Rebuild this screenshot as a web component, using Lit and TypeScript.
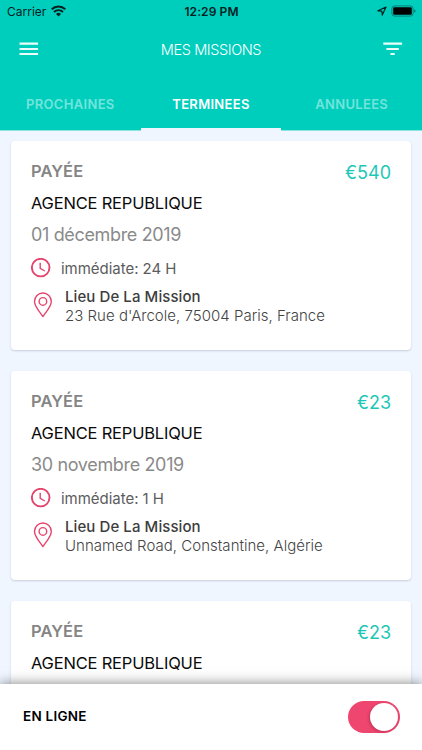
import { LitElement, html, css, nothing } from "lit";
import { customElement, property, state } from "lit/decorators.js";
import { classMap } from "lit/directives/class-map.js";

interface Mission {
  status: string;
  price: string;
  agency: string;
  date?: string;
  duration?: string;
  address?: string;
}

@customElement("status-bar")
class StatusBar extends LitElement {
  static styles = css`
    :host {
      display: grid;
      grid-template-columns: 1fr auto 1fr;
      align-items: center;
      height: 22px;
      padding: 0 6px 0 7px;
      color: #04211e;
    }
    .left { display: flex; align-items: center; gap: 5px; }
    .carrier { font-size: 12px; letter-spacing: 0; }
    .time { font-size: 12px; font-weight: 600; letter-spacing: 0.1px; }
    .right { display: flex; align-items: center; justify-content: flex-end; gap: 4px; }
    svg { display: block; }
  `;
  render() {
    return html`
      <div class="left">
        <span class="carrier">Carrier</span>
        <svg width="15" height="12" viewBox="0 0 15 12" fill="none" stroke="#04211e">
          <path d="M0.7 4.3A9.6 9.6 0 0 1 14.3 4.3" stroke-width="2.1" />
          <path d="M3 7A6.3 6.3 0 0 1 12 7" stroke-width="1.9" />
          <path d="M7.5 11.6L5 9A3.5 3.5 0 0 1 10 9Z" fill="#04211e" stroke="none" />
        </svg>
      </div>
      <span class="time">12:29 PM</span>
      <div class="right">
        <svg width="10" height="10" viewBox="0 0 10 10" fill="none" stroke="#04211e" stroke-width="1.2" stroke-linejoin="round">
          <path d="M9 1L0.9 4.8L4.8 5.2L5.3 9.1Z" />
        </svg>
        <svg width="25" height="12" viewBox="0 0 25 12">
          <rect x="0.9" y="0.9" width="21.2" height="10.2" rx="2.8" fill="none" stroke="#04211e" stroke-opacity="0.45" />
          <rect x="2.2" y="2.2" width="18.6" height="7.6" rx="1.4" fill="#000" />
          <path d="M23.2 4.2Q24.6 4.8 24.6 6T23.2 7.8Z" fill="#04211e" fill-opacity="0.5" />
        </svg>
      </div>
    `;
  }
}

@customElement("mission-card")
class MissionCard extends LitElement {
  @property({ attribute: false }) mission!: Mission;
  static styles = css`
    :host {
      display: block;
      box-sizing: border-box;
      height: 209px;
      flex: none;
      padding: 20px 20px 0;
      background: #fff;
      border-radius: 4px;
      box-shadow: 0 1px 2px rgba(60, 70, 90, 0.22);
      white-space: nowrap;
    }
    .head { display: flex; justify-content: space-between; height: 22px; }
    .status { font-size: 16.5px; line-height: 20px; font-weight: 600; letter-spacing: 0.1px; color: #858585; }
    .price { font-size: 18px; line-height: 23px; color: #1dc7b7; }
    .agency { height: 20px; margin-top: 10px; font-size: 16.5px; line-height: 20px; letter-spacing: -0.2px; color: #0a0a0a; }
    .date { height: 22px; margin-top: 11px; font-size: 18px; line-height: 22px; letter-spacing: -0.35px; color: #8a8a8a; }
    .row { display: flex; align-items: center; }
    .when { height: 20px; margin-top: 12px; }
    .where { height: 38px; margin-top: 9px; }
    .clock { width: 20px; margin-right: 10px; }
    .pin { width: 20px; margin: 0 12px 0 2px; position: relative; top: -1px; }
    .duration { font-size: 15px; letter-spacing: -0.03px; color: #5c5c5c; }
    .title { font-size: 15px; font-weight: 500; line-height: 19px; letter-spacing: 0.08px; color: #3d3d3d; }
    .address { font-size: 15px; font-weight: 300; line-height: 19px; letter-spacing: 0.02px; color: #444; }
    svg { display: block; }
  `;
  private details(m: Mission) {
    return html`
      <div class="date"><span>${m.date}</span></div>
      <div class="row when">
        <svg class="clock" width="20" height="20" viewBox="0 0 20 20" fill="none" stroke="#e5446d">
          <circle cx="9.7" cy="9.6" r="8.8" stroke-width="1.9" />
          <path d="M9.2 4.8V10.3L13.8 13" stroke-width="1.4" />
        </svg>
        <span class="duration">${m.duration}</span>
      </div>
      <div class="row where">
        <svg class="pin" width="20" height="26" viewBox="0 0 20 26" fill="none" stroke="#e5446d" stroke-width="1.4" stroke-linejoin="round">
          <path d="M9.9 24.5C7 20.3 1.5 14.3 1.5 9.4A8.4 8.4 0 0 1 18.3 9.4C18.3 14.3 12.8 20.3 9.9 24.5Z" />
          <circle cx="9.9" cy="9.4" r="3.8" />
        </svg>
        <div>
          <div class="title"><span>Lieu De La Mission</span></div>
          <div class="address"><span>${m.address}</span></div>
        </div>
      </div>
    `;
  }
  render() {
    const m = this.mission;
    return html`
      <div class="head"><span class="status">${m.status}</span><span class="price">${m.price}</span></div>
      <div class="agency"><span>${m.agency}</span></div>
      ${m.date ? this.details(m) : nothing}
    `;
  }
}

@customElement("app-root")
class AppRoot extends LitElement {
  @state() private tab = 1;
  @state() private online = true;
  private tabs = ["PROCHAINES", "TERMINEES", "ANNULEES"];
  private missions: Mission[] = [
    { status: "PAYÉE", price: "€540", agency: "AGENCE REPUBLIQUE", date: "01 décembre 2019", duration: "immédiate: 24 H", address: "23 Rue d'Arcole, 75004 Paris, France" },
    { status: "PAYÉE", price: "€23", agency: "AGENCE REPUBLIQUE", date: "30 novembre 2019", duration: "immédiate: 1 H", address: "Unnamed Road, Constantine, Algérie" },
    { status: "PAYÉE", price: "€23", agency: "AGENCE REPUBLIQUE" },
  ];
  static styles = css`
    :host {
      display: flex;
      flex-direction: column;
      height: 750px;
      overflow: hidden;
      background: #eff6ff;
      font-family: Inter, "Liberation Sans", sans-serif;
    }
    .header { flex: none; height: 130px; background: #00cebd; box-shadow: 0 1px 0 #8ee5e0; z-index: 1; }
    .bar { display: grid; grid-template-columns: 1fr auto 1fr; align-items: center; height: 54px; padding: 0 19px; }
    .heading { font-size: 14.5px; font-weight: 300; letter-spacing: -0.4px; color: #fff; }
    .filter { justify-self: end; }
    svg { display: block; }
    .tabs { display: grid; grid-template-columns: repeat(3, 1fr); height: 55px; }
    .tab {
      box-sizing: border-box;
      display: flex;
      align-items: center;
      justify-content: center;
      padding-top: 3px;
      border-bottom: 3px solid transparent;
      font-size: 13px;
      font-weight: 600;
      letter-spacing: 0.32px;
      color: #73e4db;
      cursor: pointer;
    }
    .tab.active { color: #fff; border-color: #eff6ff; box-shadow: 0 1px 0 #eff6ff; }
    .list { flex: 1; min-height: 0; overflow: hidden; display: flex; flex-direction: column; gap: 21px; padding: 11px 11px 0; }
    .footer {
      position: relative;
      flex: none;
      display: flex;
      align-items: center;
      justify-content: space-between;
      box-sizing: border-box;
      height: 66px;
      padding: 0 22px 1px 23px;
      background: #fff;
      box-shadow: 0 0 12px rgba(0, 0, 0, 0.5);
    }
    .online { margin-bottom: 1px; font-size: 13.5px; font-weight: 600; letter-spacing: 0.25px; color: #000; }
    .switch { box-sizing: border-box; display: flex; width: 52px; height: 32px; padding: 2px; border-radius: 16px; background: #ccc; cursor: pointer; }
    .switch.on { justify-content: flex-end; background: #ef466f; }
    .knob { width: 28px; height: 28px; border-radius: 50%; background: #fff; box-shadow: -1px 1px 3px rgba(80, 0, 30, 0.3); }
  `;
  render() {
    return html`
      <div class="header">
        <status-bar></status-bar>
        <div class="bar">
          <svg width="20" height="14" viewBox="0 0 20 14" fill="#e9fffc">
            <path d="M0.5 0.6h18.6v2.1H0.5zM0.5 5.9h18.6v2.1H0.5zM0.5 11h18.6v2.1H0.5z" />
          </svg>
          <span class="heading">MES MISSIONS</span>
          <svg class="filter" width="20" height="14" viewBox="0 0 20 14" fill="#e9fffc">
            <path d="M0.3 0.6h18.8v2.1H0.3zM3.4 5.9h12.4v2.1H3.4zM7.5 11h4.2v2.1H7.5z" />
          </svg>
        </div>
        <div class="tabs">
          ${this.tabs.map((t, i) => html`<div class=${classMap({ tab: true, active: i === this.tab })} @click=${() => (this.tab = i)}><span>${t}</span></div>`)}
        </div>
      </div>
      <div class="list">${this.missions.map((m) => html`<mission-card .mission=${m}></mission-card>`)}</div>
      <div class="footer">
        <span class="online">EN LIGNE</span>
        <div class=${classMap({ switch: true, on: this.online })} @click=${() => (this.online = !this.online)}><div class="knob"></div></div>
      </div>
    `;
  }
}
